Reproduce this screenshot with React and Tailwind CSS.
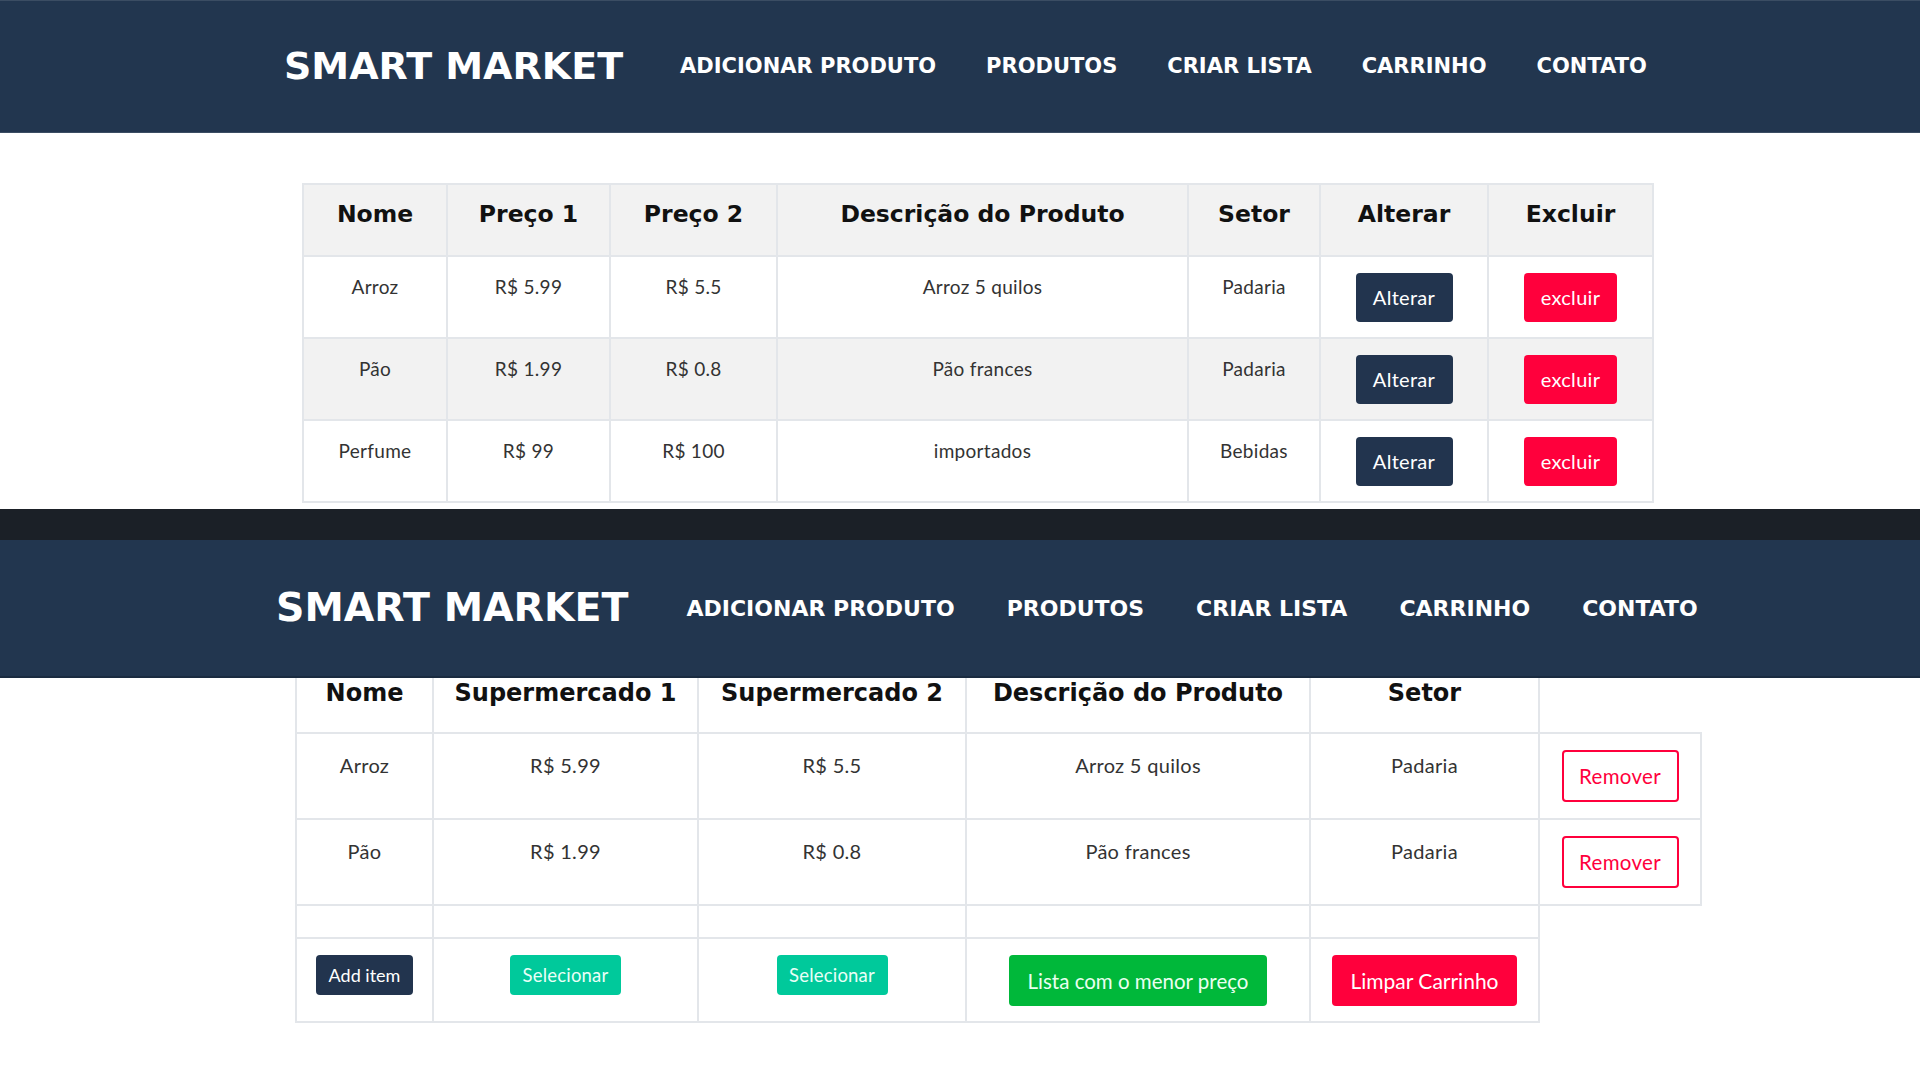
import React from "react";

const HF = { fontFamily: '"DejaVu Sans", "Liberation Sans", sans-serif' };
const BF = { fontFamily: 'Lato, "Open Sans", sans-serif' };

function NavBar({ big }) {
  const items = ["ADICIONAR PRODUTO", "PRODUTOS", "CRIAR LISTA", "CARRINHO", "CONTATO"];
  return (
    <div
      className={
        big
          ? "h-[138px] bg-[#22364f] border-b-2 border-[#1a2b40] flex items-center pl-[276px] relative z-10"
          : "h-[133px] bg-[#22364f] border-t border-b border-[#3b4d63] flex items-center pl-[284px]"
      }
      style={HF}
    >
      <div className={big ? "text-white font-bold text-[39.5px]" : "text-white font-bold text-[38px]"}>
        SMART MARKET
      </div>
      <div className={big ? "flex items-center ml-[58px] gap-[52px]" : "flex items-center ml-[57px] gap-[50px]"}>
        {items.map((t) => (
          <span key={t} className={big ? "text-white font-bold text-[22px]" : "text-white font-bold text-[21px]"}>
            {t}
          </span>
        ))}
      </div>
    </div>
  );
}

function TopTable() {
  const rows = [
    ["Arroz", "R$ 5.99", "R$ 5.5", "Arroz 5 quilos", "Padaria"],
    ["Pão", "R$ 1.99", "R$ 0.8", "Pão frances", "Padaria"],
    ["Perfume", "R$ 99", "R$ 100", "importados", "Bebidas"],
  ];
  const widths = [144, 163, 167, 411, 132, 168, 165];
  const heads = ["Nome", "Preço 1", "Preço 2", "Descrição do Produto", "Setor", "Alterar", "Excluir"];
  return (
    <table className="ml-[302px] mt-[50px] border-collapse table-fixed border-2 border-[#e3e6ea]" style={{ width: 1350 }}>
      <colgroup>
        {widths.map((w, i) => (
          <col key={i} style={{ width: w }} />
        ))}
      </colgroup>
      <thead>
        <tr className="bg-[#f2f2f2] h-[72px]">
          {heads.map((h) => (
            <th key={h} className="border-2 border-[#e3e6ea] align-top pt-[11px] text-[23.5px] leading-[36px] font-bold text-[#111]" style={HF}>
              {h}
            </th>
          ))}
        </tr>
      </thead>
      <tbody>
        {rows.map((r, i) => (
          <tr key={i} className={i === 1 ? "bg-[#f2f2f2] h-[82px]" : "bg-white h-[82px]"}>
            {r.map((c, j) => (
              <td key={j} className="border-2 border-[#e3e6ea] align-top pt-4 text-center text-[19px] tracking-[0.3px] leading-[27px] text-[#333]" style={BF}>
                {c}
              </td>
            ))}
            <td className="border-2 border-[#e3e6ea] align-top pt-4 text-center">
              <button className="bg-[#22344e] text-white text-[20px] tracking-[0.3px] leading-[27px] py-[11px] rounded-[4px] w-[97px]" style={BF}>
                Alterar
              </button>
            </td>
            <td className="border-2 border-[#e3e6ea] align-top pt-4 text-center">
              <button className="bg-[#ff003c] text-white text-[20px] tracking-[0.3px] leading-[27px] py-[11px] rounded-[4px] w-[93px]" style={BF}>
                excluir
              </button>
            </td>
          </tr>
        ))}
      </tbody>
    </table>
  );
}

function BottomTable() {
  const widths = [137, 265, 268, 344, 229, 162];
  const heads = ["Nome", "Supermercado 1", "Supermercado 2", "Descrição do Produto", "Setor"];
  const rows = [
    ["Arroz", "R$ 5.99", "R$ 5.5", "Arroz 5 quilos", "Padaria"],
    ["Pão", "R$ 1.99", "R$ 0.8", "Pão frances", "Padaria"],
  ];
  const bc = "border-2 border-[#e3e6ea]";
  return (
    <table className="ml-[295px] border-collapse table-fixed" style={{ width: 1405 }}>
      <colgroup>
        {widths.map((w, i) => (
          <col key={i} style={{ width: w }} />
        ))}
      </colgroup>
      <thead>
        <tr className="h-[55px]">
          {heads.map((h) => (
            <th
              key={h}
              className="border-x-2 border-b-2 border-[#e3e6ea] align-top pt-0 text-[24px] leading-[30px] font-bold text-[#111]"
              style={HF}
            >
              {h}
            </th>
          ))}
          <th className="border-b-2 border-[#e3e6ea]"></th>
        </tr>
      </thead>
      <tbody>
        {rows.map((r, i) => (
          <tr key={i} className="h-[86px]">
            {r.map((c, j) => (
              <td key={j} className={bc + " align-top pt-4 text-center text-[20px] tracking-[0.3px] leading-[30px] text-[#333]"} style={BF}>
                {c}
              </td>
            ))}
            <td className={bc + " align-top pt-4 text-center"}>
              <button className="border-2 border-[#ff003c] text-[#ff003c] bg-white text-[20.5px] tracking-[0.3px] leading-[30px] py-[9px] rounded-[4px] w-[117px]" style={BF}>
                Remover
              </button>
            </td>
          </tr>
        ))}
        <tr className="h-[33px]">
          {[0, 1, 2, 3, 4].map((j) => (
            <td key={j} className={bc}></td>
          ))}
          <td className="border-t-2 border-[#e3e6ea]"></td>
        </tr>
        <tr className="h-[84px]">
          <td className={bc + " align-top pt-4 text-center"}>
            <button className="bg-[#22344e] text-white text-[18px] leading-[26px] h-[40px] w-[97px] rounded-[4px]" style={BF}>
              Add item
            </button>
          </td>
          <td className={bc + " align-top pt-4 text-center"}>
            <button className="bg-[#00c99b] text-[#e8fff7] text-[18.5px] tracking-[0.2px] leading-[26px] h-[40px] w-[111px] rounded-[4px]" style={BF}>
              Selecionar
            </button>
          </td>
          <td className={bc + " align-top pt-4 text-center"}>
            <button className="bg-[#00c99b] text-[#e8fff7] text-[18.5px] tracking-[0.2px] leading-[26px] h-[40px] w-[111px] rounded-[4px]" style={BF}>
              Selecionar
            </button>
          </td>
          <td className={bc + " align-top pt-4 text-center"}>
            <button className="bg-[#00b83a] text-[#eafff0] text-[20.5px] leading-[28px] h-[51px] w-[258px] rounded-[4px]" style={BF}>
              Lista com o menor preço
            </button>
          </td>
          <td className={bc + " align-top pt-4 text-center"}>
            <button className="bg-[#ff003c] text-white text-[21px] leading-[28px] h-[51px] w-[185px] rounded-[4px]" style={BF}>
              Limpar Carrinho
            </button>
          </td>
          <td></td>
        </tr>
      </tbody>
    </table>
  );
}

export default function App() {
  return (
    <div className="w-[1920px] h-[1080px] bg-white overflow-hidden">
      <div className="h-[509px] overflow-hidden bg-white">
        <NavBar />
        <TopTable />
      </div>
      <div className="h-[31px] bg-[#1b2027]"></div>
      <div className="h-[540px] overflow-hidden bg-white">
        <NavBar big />
        <BottomTable />
      </div>
    </div>
  );
}
